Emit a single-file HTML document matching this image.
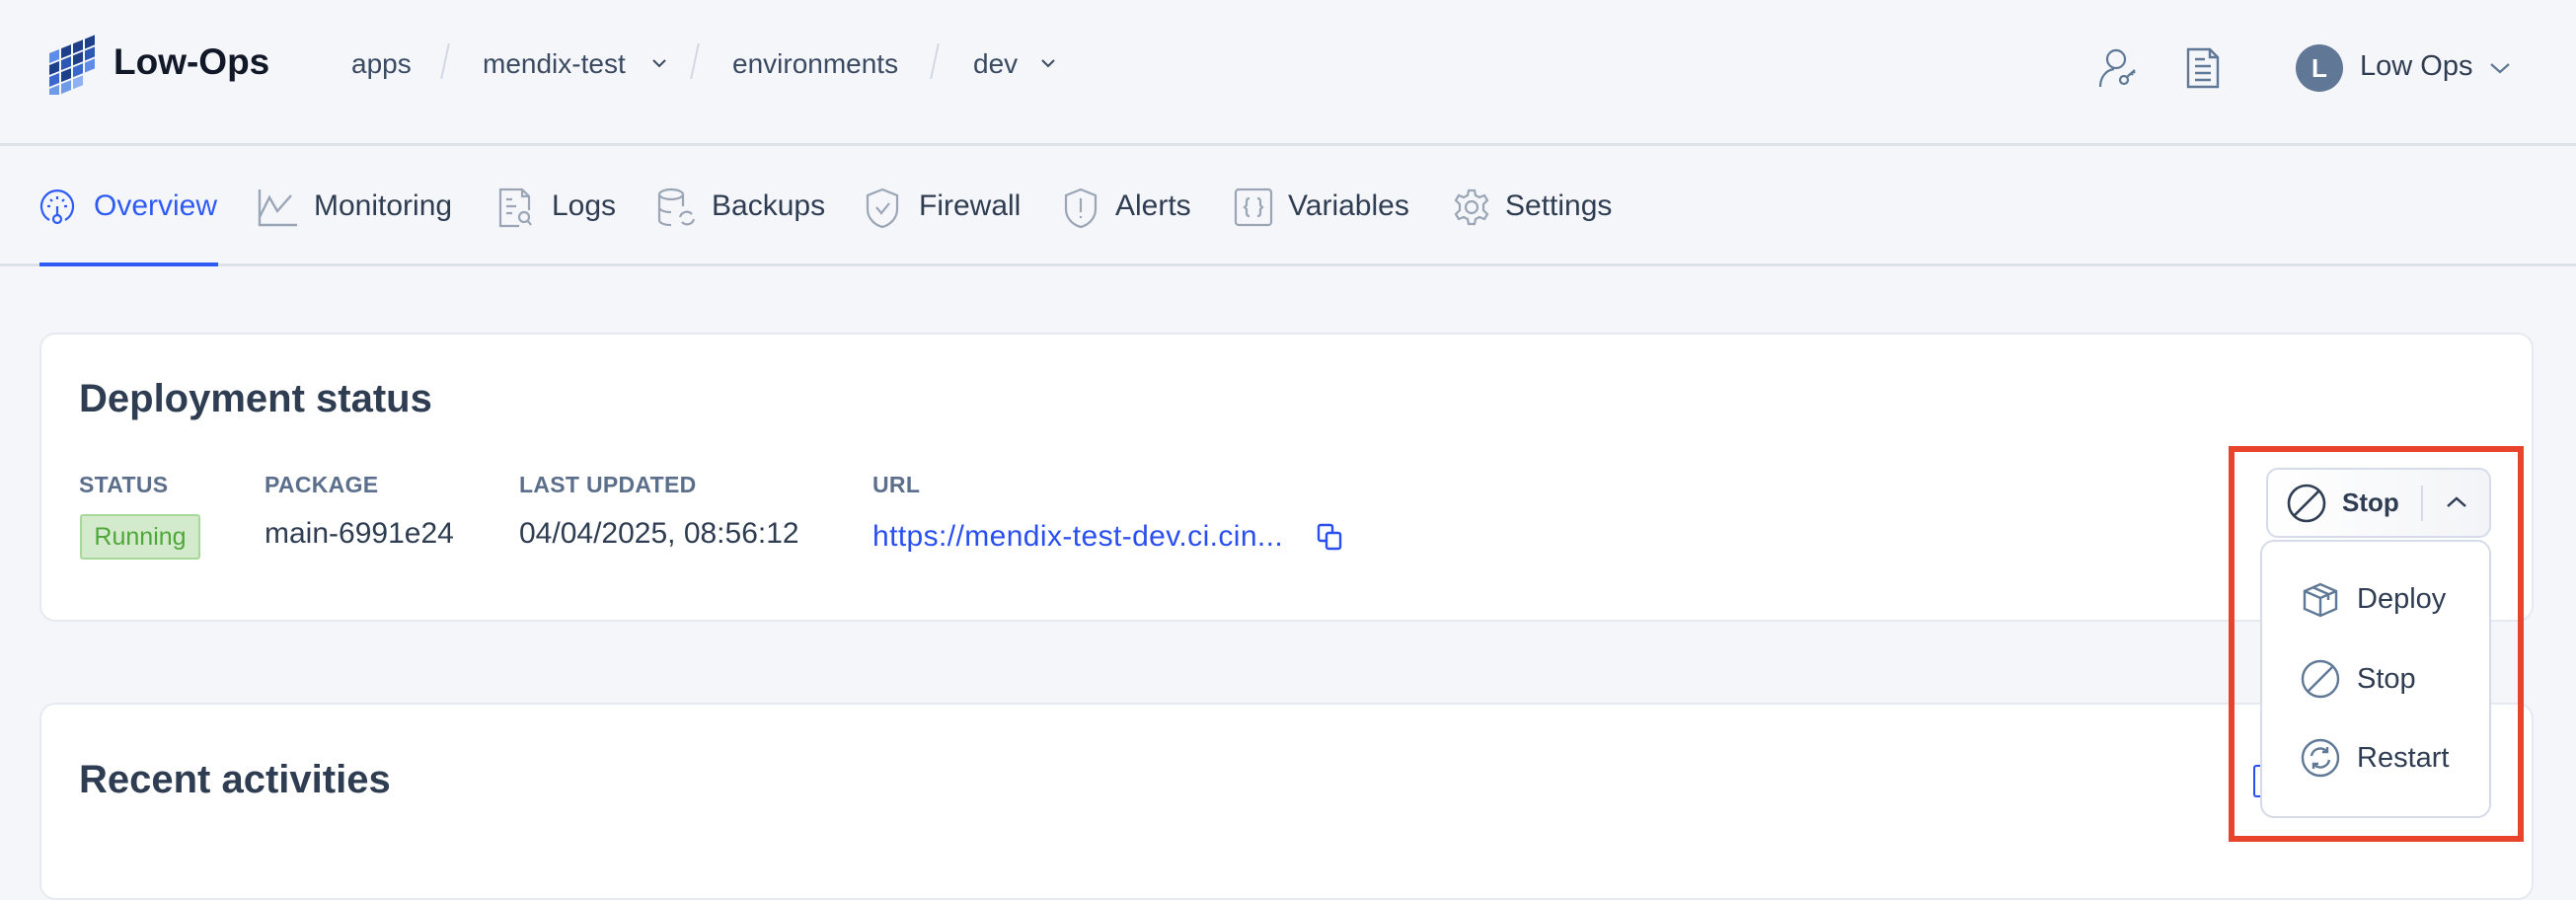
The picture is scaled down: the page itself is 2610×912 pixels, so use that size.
<!DOCTYPE html>
<html><head><meta charset="utf-8"><style>
*{box-sizing:border-box;margin:0;padding:0}
body{width:2610px;height:872px;overflow:hidden;background:#f5f6fa;font-family:"Liberation Sans",sans-serif;color:#2f3d52;position:relative}
.abs{position:absolute}
.hdr{left:0;top:0;width:2610px;height:148px;border-bottom:3px solid #dde1ea}
.tabs{left:0;top:148px;width:2610px;height:122px;border-bottom:3px solid #dde1ea}
.bc{font-size:28px;color:#3a4a61;top:49px}
.sep{top:44px;width:2px;height:36px;background:#d2d8e3;transform:skewX(-12deg)}
.tab{top:192px;font-size:30px;color:#2f3d52}
.card{background:#fff;border:2px solid #e6e9ef;border-radius:16px}
.lbl{top:478px;font-size:23px;color:#5b6f8c;font-weight:bold;letter-spacing:0.3px}
.val{top:524px;font-size:30px;color:#2f3d52}
svg{position:absolute}
</style></head><body>
<div class="abs hdr"></div>
<!-- logo -->
<svg style="left:42px;top:34px" width="62" height="62" viewBox="0 0 62 62">
<g transform="translate(8,16) skewY(-22)">
<rect x="0" y="4" width="10" height="10" fill="#5d8de8"/><rect x="12" y="4" width="10" height="10" fill="#1e3f8a"/><rect x="24" y="4" width="10" height="10" fill="#1e3f8a"/><rect x="36" y="4" width="10" height="10" fill="#1e3f8a"/>
<rect x="0" y="16" width="10" height="10" fill="#1e3f8a"/><rect x="12" y="16" width="10" height="10" fill="#2c57b5"/><rect x="24" y="16" width="10" height="10" fill="#1e3f8a"/><rect x="36" y="16" width="10" height="10" fill="#2c57b5"/>
<rect x="0" y="28" width="10" height="10" fill="#3a68cf"/><rect x="12" y="28" width="10" height="10" fill="#1e3f8a"/><rect x="24" y="28" width="10" height="10" fill="#3a68cf"/><rect x="36" y="28" width="10" height="10" fill="#5d8de8"/>
<rect x="0" y="40" width="10" height="10" fill="#6f9ae8"/><rect x="12" y="40" width="10" height="10" fill="#6f9ae8"/><rect x="24" y="40" width="10" height="10" fill="#8fb2ee"/>
</g></svg>
<div class="abs" style="left:115px;top:42px;font-size:37px;font-weight:bold;color:#111827">Low-Ops</div>
<div class="abs bc" style="left:356px">apps</div>
<div class="abs sep" style="left:450px"></div>
<div class="abs bc" style="left:489px">mendix-test</div>
<svg style="left:660px;top:58px" width="16" height="12"><path d="M2 3l6 6 6-6" fill="none" stroke="#3a4a61" stroke-width="2"/></svg>
<div class="abs sep" style="left:703px"></div>
<div class="abs bc" style="left:742px">environments</div>
<div class="abs sep" style="left:946px"></div>
<div class="abs bc" style="left:986px">dev</div>
<svg style="left:1054px;top:58px" width="16" height="12"><path d="M2 3l6 6 6-6" fill="none" stroke="#3a4a61" stroke-width="2"/></svg>
<!-- right icons -->
<svg style="left:2124px;top:46px" width="44" height="44" viewBox="0 0 44 44" fill="none" stroke="#5f7896" stroke-width="2.2"><circle cx="20" cy="14" r="9"/><path d="M4 42c0-10 6-17 14-18"/><circle cx="28" cy="35" r="4"/><path d="M31 32l8-7M35 28l2 2M37 26l2 2"/></svg>
<svg style="left:2214px;top:48px" width="36" height="42" viewBox="0 0 36 42" fill="none" stroke="#5f7896" stroke-width="2.4"><path d="M3 2h22l8 8v30H3z"/><path d="M25 2v8h8"/><path d="M10 12h10M10 19h16M10 26h16M10 33h16"/></svg>
<div class="abs" style="left:2326px;top:45px;width:48px;height:48px;border-radius:50%;background:#607896;color:#fff;font-size:26px;font-weight:bold;text-align:center;line-height:48px">L</div>
<div class="abs" style="left:2391px;top:51px;font-size:29px;color:#2f3d52">Low Ops</div>
<svg style="left:2522px;top:62px" width="22" height="14"><path d="M2 3l9 8 9-8" fill="none" stroke="#5f7896" stroke-width="2.2"/></svg>

<div class="abs tabs"></div>
<div class="abs" style="left:40px;top:266px;width:181px;height:4px;background:#2f5bf5"></div>
<svg style="left:40px;top:191px" width="36" height="38" viewBox="0 0 36 38" fill="none" stroke="#2f5bf5" stroke-width="2.2"><path d="M10 32A16 16 0 1 1 26 32"/><path d="M18 8v3M8 18h3M25 18h3M11 11l2 2M25 11l-2 2M18 18v10"/><circle cx="18" cy="31" r="4"/></svg>
<div class="abs tab" style="left:95px;color:#2f5bf5">Overview</div>
<svg style="left:260px;top:190px" width="42" height="40" fill="none" stroke="#9aa5b5" stroke-width="2.4"><path d="M3 2v36h38"/><path d="M3 30l10-20 8 14 14-16"/></svg>
<div class="abs tab" style="left:318px">Monitoring</div>
<svg style="left:504px;top:190px" width="36" height="42" fill="none" stroke="#9aa5b5" stroke-width="2.2"><path d="M22 39H3V2h22l7 7v14"/><path d="M25 2v7h7M9 12h6M9 19h10M9 26h6"/><circle cx="27" cy="30" r="5"/><path d="M31 34l3 4"/></svg>
<div class="abs tab" style="left:559px">Logs</div>
<svg style="left:665px;top:190px" width="42" height="42" fill="none" stroke="#9aa5b5" stroke-width="2.2"><ellipse cx="15" cy="7" rx="12" ry="5"/><path d="M3 7v26c0 3 5 5 12 5M27 7v12M3 20c0 3 5 5 12 5"/><path d="M24 30a7 7 0 0 1 12-3M38 32a7 7 0 0 1-12 3"/></svg>
<div class="abs tab" style="left:721px">Backups</div>
<svg style="left:876px;top:190px" width="36" height="42" fill="none" stroke="#9aa5b5" stroke-width="2.2"><path d="M18 2l15 6v14c0 9-7 16-15 18C10 38 3 31 3 22V8z"/><path d="M12 20l5 6 8-10"/></svg>
<div class="abs tab" style="left:931px">Firewall</div>
<svg style="left:1077px;top:190px" width="36" height="42" fill="none" stroke="#9aa5b5" stroke-width="2.2"><path d="M18 2l15 6v14c0 9-7 16-15 18C10 38 3 31 3 22V8z"/><path d="M18 11v14M18 29v2"/></svg>
<div class="abs tab" style="left:1130px">Alerts</div>
<svg style="left:1250px;top:190px" width="40" height="40" fill="none" stroke="#9aa5b5" stroke-width="2.2"><rect x="2" y="2" width="36" height="36" rx="3"/><path d="M16 11c-3 0-3 2-3 4v3l-2 2 2 2v3c0 2 0 4 3 4M24 11c3 0 3 2 3 4v3l2 2-2 2v3c0 2 0 4-3 4"/></svg>
<div class="abs tab" style="left:1305px">Variables</div>
<svg style="left:1471px;top:190px" width="40" height="40" viewBox="0 0 40 40" fill="none" stroke="#9aa5b5" stroke-width="2.2"><circle cx="20" cy="20" r="6"/><path d="M17 3h6l1 5 4 2 5-2 3 5-4 4v6l4 4-3 5-5-2-4 2-1 5h-6l-1-5-4-2-5 2-3-5 4-4v-6l-4-4 3-5 5 2 4-2z"/></svg>
<div class="abs tab" style="left:1525px">Settings</div>

<!-- card 1 -->
<div class="abs card" style="left:40px;top:337px;width:2527px;height:293px"></div>
<div class="abs" style="left:80px;top:382px;font-size:40px;font-weight:bold;color:#2f3d52">Deployment status</div>
<div class="abs lbl" style="left:80px">STATUS</div>
<div class="abs lbl" style="left:268px">PACKAGE</div>
<div class="abs lbl" style="left:526px">LAST UPDATED</div>
<div class="abs lbl" style="left:884px">URL</div>
<div class="abs" style="left:81px;top:521px;width:122px;height:46px;background:#d3ebcc;border:2px solid #a8d79c;border-radius:3px;color:#4fa63a;font-size:25px;text-align:center;line-height:42px">Running</div>
<div class="abs val" style="left:268px">main-6991e24</div>
<div class="abs val" style="left:526px">04/04/2025, 08:56:12</div>
<div class="abs val" style="left:884px;top:527px;color:#2a4ff0;letter-spacing:0.4px">https://mendix-test-dev.ci.cin...</div>
<svg style="left:1334px;top:530px" width="30" height="30" fill="none" stroke="#2a4ff0" stroke-width="2.4"><rect x="2" y="2" width="14" height="16" rx="2"/><rect x="10" y="10" width="14" height="16" rx="2" fill="#fff"/></svg>

<!-- card 2 -->
<div class="abs card" style="left:40px;top:712px;width:2527px;height:200px"></div>
<div class="abs" style="left:80px;top:768px;font-size:40px;font-weight:bold;color:#2f3d52">Recent activities</div>
<div class="abs" style="left:2283px;top:775px;width:8px;height:33px;border:2px solid #2a4ff0;border-right:none;border-radius:3px 0 0 3px"></div>

<!-- red box -->
<div class="abs" style="left:2258px;top:452px;width:299px;height:401px;border:6px solid #e8432d"></div>
<div class="abs" style="left:2296px;top:474px;width:228px;height:71px;border:2px solid #d5dbe8;border-radius:12px;background:linear-gradient(90deg,#fff,#f3f4f7)"></div>
<div class="abs" style="left:2453px;top:492px;width:2px;height:36px;background:#d5dbe8"></div>
<svg style="left:2317px;top:490px" width="40" height="40" fill="none" stroke="#2f3d52" stroke-width="2.6"><circle cx="20" cy="20" r="18"/><path d="M8 32L32 8"/></svg>
<div class="abs" style="left:2373px;top:494px;font-size:26px;font-weight:bold;color:#2f3d52">Stop</div>
<svg style="left:2478px;top:502px" width="22" height="14"><path d="M2 11l9-8 9 8" fill="none" stroke="#2f3d52" stroke-width="2.4"/></svg>
<div class="abs" style="left:2290px;top:547px;width:234px;height:282px;border:2px solid #d5dbe8;border-radius:14px;background:#fff"></div>
<svg style="left:2332px;top:589px" width="38" height="38" viewBox="0 0 38 38" fill="none" stroke="#5f7896" stroke-width="2.4"><path d="M3 10l16-7 16 7v18l-16 7-16-7z"/><path d="M3 10l16 7 16-7M19 17v18M11 6l16 7v6"/></svg>
<div class="abs" style="left:2388px;top:591px;font-size:29px;color:#2f3d52">Deploy</div>
<svg style="left:2331px;top:668px" width="40" height="40" fill="none" stroke="#5f7896" stroke-width="2.4"><circle cx="20" cy="20" r="18"/><path d="M8 32L32 8"/></svg>
<div class="abs" style="left:2388px;top:672px;font-size:29px;color:#2f3d52">Stop</div>
<svg style="left:2331px;top:748px" width="40" height="40" fill="none" stroke="#5f7896" stroke-width="2.4"><circle cx="20" cy="20" r="18"/><path d="M11 18a9 9 0 0 1 16-4M29 22a9 9 0 0 1-16 4"/><path d="M27 9v5h-5M13 31v-5h5"/></svg>
<div class="abs" style="left:2388px;top:752px;font-size:29px;color:#2f3d52">Restart</div>
</body></html>
